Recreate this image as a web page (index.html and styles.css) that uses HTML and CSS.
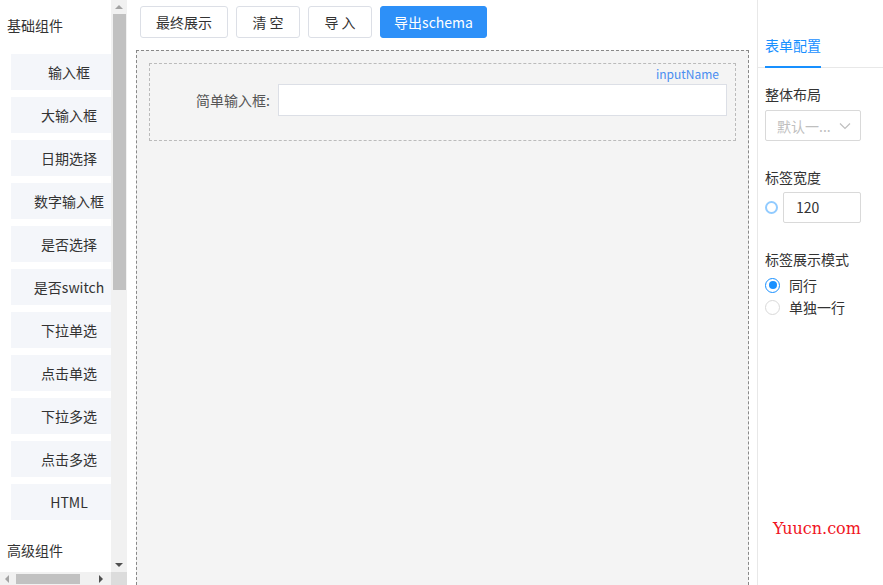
FILE: index.html
```html
<!DOCTYPE html>
<html lang="zh-CN">

<head>
    <meta charset="UTF-8">
    <title>表单设计器</title>
    <link rel="stylesheet" href="styles.css">
</head>

<body>
    <div class="designer">
        <aside class="sidebar">
            <div class="sidebar-body">
                <div class="sidebar-list">
                    <div class="group-title">基础组件</div>
                    <div class="comp-list">
                        <div class="comp-item">输入框</div>
                        <div class="comp-item">大输入框</div>
                        <div class="comp-item">日期选择</div>
                        <div class="comp-item">数字输入框</div>
                        <div class="comp-item">是否选择</div>
                        <div class="comp-item">是否switch</div>
                        <div class="comp-item">下拉单选</div>
                        <div class="comp-item">点击单选</div>
                        <div class="comp-item">下拉多选</div>
                        <div class="comp-item">点击多选</div>
                        <div class="comp-item">HTML</div>
                    </div>
                    <div class="group-title">高级组件</div>
                </div>
                <div class="vscroll">
                    <span class="arrow arrow-up"></span>
                    <span class="vthumb"></span>
                    <span class="track-fill"></span>
                    <span class="arrow arrow-down"></span>
                </div>
            </div>
            <div class="hscroll">
                <span class="arrow arrow-left"></span>
                <span class="hthumb"></span>
                <span class="track-fill"></span>
                <span class="arrow arrow-right"></span>
                <span class="corner"></span>
            </div>
        </aside>

        <main class="main">
            <div class="toolbar">
                <button class="btn">最终展示</button>
                <button class="btn btn-short">清 空</button>
                <button class="btn btn-short">导 入</button>
                <button class="btn btn-primary">导出schema</button>
            </div>
            <div class="canvas">
                <div class="form-item">
                    <span class="field-name">inputName</span>
                    <label class="field-label">简单输入框:</label>
                    <div class="field-input"></div>
                </div>
            </div>
        </main>

        <aside class="settings">
            <div class="tabs">
                <div class="tab active">表单配置</div>
            </div>
            <div class="setting">
                <div class="setting-title first">整体布局</div>
                <div class="select">
                    <span>默认一...</span>
                    <svg width="12" height="8" viewBox="0 0 12 8"><path d="M1 1.5l5 5 5-5" fill="none" stroke="#bfbfbf" stroke-width="1.2"/></svg>
                </div>
            </div>
            <div class="setting">
                <div class="setting-title">标签宽度</div>
                <div class="width-row">
                    <span class="ring"></span>
                    <div class="num-input">120</div>
                </div>
            </div>
            <div class="setting">
                <div class="setting-title">标签展示模式</div>
                <div class="radio checked"><span class="dot"></span>同行</div>
                <div class="radio"><span class="dot"></span>单独一行</div>
            </div>
        </aside>

        <div class="watermark">Yuucn.com</div>
    </div>
</body>

</html>
```

FILE: styles.css
```css
body {
    margin: 0;
    font-family: "Noto Sans CJK SC", "Noto Sans", sans-serif;
    font-size: 14px;
    color: #333;
    background-color: #fff;
    overflow: hidden;
}

.designer {
    display: flex;
    height: 585px;
    position: relative;
}

/* 左侧组件列表 */
.sidebar {
    width: 127px;
    flex-shrink: 0;
    display: flex;
    flex-direction: column;
}

.sidebar-body {
    flex: 1;
    display: flex;
    min-height: 0;
}

.sidebar-list {
    width: 111px;
    overflow: hidden;
    padding-top: 2px;
}

.group-title {
    height: 46px;
    line-height: 46px;
    padding-left: 7px;
    white-space: nowrap;
}

.comp-list {
    padding-top: 6px;
}

.comp-item {
    width: 116px;
    height: 36px;
    line-height: 36px;
    margin: 0 0 7px 11px;
    background-color: #f4f6fa;
    text-align: center;
    white-space: nowrap;
}

.vscroll {
    width: 16px;
    background-color: #f1f1f1;
    display: flex;
    flex-direction: column;
    align-items: center;
}

.vthumb {
    width: 13px;
    height: 276px;
    background-color: #c1c1c1;
}

.track-fill {
    flex: 1;
}

.hscroll {
    height: 13px;
    background-color: #f1f1f1;
    display: flex;
    align-items: center;
}

.hthumb {
    width: 64px;
    height: 10px;
    margin-left: 2px;
    background-color: #c1c1c1;
}

.corner {
    width: 16px;
    height: 13px;
    background-color: #dcdcdc;
}

.arrow {
    width: 14px;
    height: 14px;
    display: flex;
    flex-shrink: 0;
    align-items: center;
    justify-content: center;
}

.arrow::before {
    content: "";
    width: 0;
    height: 0;
}

.arrow-up::before {
    border-left: 4px solid transparent;
    border-right: 4px solid transparent;
    border-bottom: 4px solid #a3a3a3;
}

.arrow-down::before {
    border-left: 4px solid transparent;
    border-right: 4px solid transparent;
    border-top: 4px solid #505050;
}

.arrow-left::before {
    border-top: 4px solid transparent;
    border-bottom: 4px solid transparent;
    border-right: 4px solid #a3a3a3;
}

.arrow-right {
    margin-right: 3px;
}

.arrow-right::before {
    border-top: 4px solid transparent;
    border-bottom: 4px solid transparent;
    border-left: 4px solid #505050;
}

/* 中间画布 */
.main {
    flex: 1;
    padding: 0 8px 0 9px;
    display: flex;
    flex-direction: column;
}

.toolbar {
    display: flex;
    gap: 8px;
    padding: 6px 0 0 4px;
    height: 32px;
    margin-bottom: 12px;
}

.btn {
    height: 32px;
    width: 88px;
    padding: 0;
    border: 1px solid #dcdfe6;
    border-radius: 3px;
    background-color: #fff;
    color: #333;
    font-family: inherit;
    font-size: 14px;
}

.btn-short {
    width: 64px;
}

.btn-primary {
    width: 107px;
    background-color: #2d90f8;
    border-color: #2d90f8;
    color: #fff;
}

.canvas {
    flex: 1;
    border: 1px dashed #888;
    border-bottom: none;
    background-color: #f4f4f4;
    padding: 12px 12px 0;
}

.form-item {
    position: relative;
    display: flex;
    align-items: center;
    border: 1px dashed #bbb;
    padding: 20px 8px 24px 0;
}

.field-name {
    position: absolute;
    top: 2px;
    right: 16px;
    font-size: 12px;
    line-height: 16px;
    color: #4a8df0;
}

.field-label {
    width: 120px;
    padding-right: 8px;
    text-align: right;
    color: #555;
}

.field-input {
    flex: 1;
    height: 30px;
    border: 1px solid #dcdfe6;
    background-color: #fff;
}

/* 右侧配置 */
.settings {
    width: 125px;
    flex-shrink: 0;
    border-left: 1px solid #e8e8e8;
    padding-top: 24px;
}

.tabs {
    border-bottom: 1px solid #e8e8e8;
    padding-left: 7px;
}

.tab {
    display: inline-block;
    height: 42px;
    line-height: 42px;
    margin-bottom: -1px;
}

.tab.active {
    color: #1890ff;
    border-bottom: 2px solid #1890ff;
}

.setting {
    padding-left: 7px;
}

.setting-title {
    margin-top: 25px;
    height: 22px;
    line-height: 22px;
    margin-bottom: 4px;
}

.setting-title.first {
    margin-top: 15px;
    margin-bottom: 5px;
}

.select {
    display: flex;
    align-items: center;
    justify-content: space-between;
    width: 96px;
    height: 31px;
    padding: 0 9px 0 11px;
    box-sizing: border-box;
    border: 1px solid #d9d9d9;
    border-radius: 2px;
    color: #bfbfbf;
}

.width-row {
    display: flex;
    align-items: center;
    gap: 5px;
}

.ring {
    width: 9px;
    height: 9px;
    border: 2px solid #91cbff;
    border-radius: 50%;
}

.num-input {
    width: 64px;
    height: 29px;
    line-height: 29px;
    border: 1px solid #d9d9d9;
    border-radius: 2px;
    padding-left: 12px;
}

.radio {
    display: flex;
    align-items: center;
    height: 22px;
    gap: 9px;
}

.dot {
    width: 15px;
    height: 15px;
    border: 1px solid #d9d9d9;
    border-radius: 50%;
    box-sizing: border-box;
    display: flex;
    align-items: center;
    justify-content: center;
}

.radio.checked .dot {
    border-color: #1890ff;
}

.radio.checked .dot::after {
    content: "";
    width: 8px;
    height: 8px;
    border-radius: 50%;
    background-color: #1890ff;
}

.watermark {
    position: absolute;
    left: 773px;
    top: 519px;
    font-family: "DejaVu Serif", serif;
    font-size: 16px;
    color: #f0141e;
}
```
